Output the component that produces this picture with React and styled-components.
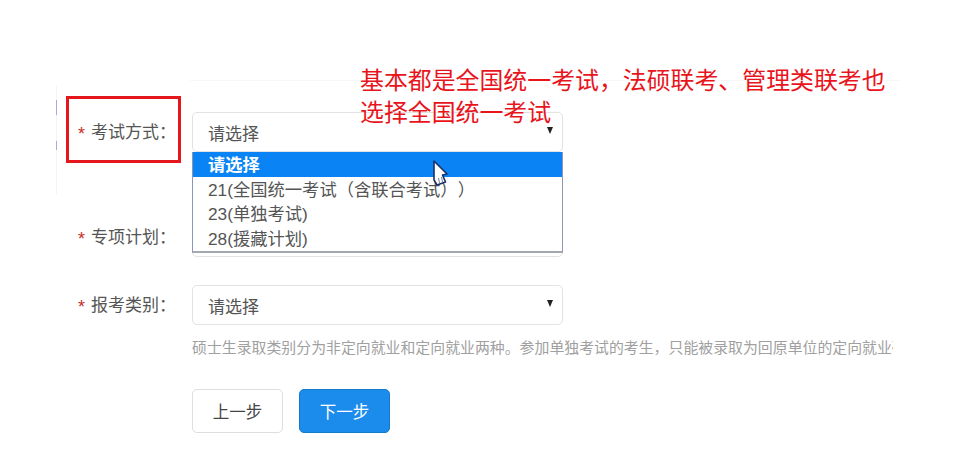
import React from "react";
import styled, { createGlobalStyle } from "styled-components";

const Global = createGlobalStyle`
  html, body { margin: 0; padding: 0; background: #fff; }
  #root { width: 954px; height: 467px; overflow: hidden; }
`;
const FONT = `"Liberation Sans", "Noto Sans CJK SC", sans-serif`;

const Page = styled.div`
  position: relative;
  width: 954px;
  height: 467px;
  padding: 80px 0 0 78px;
  box-sizing: border-box;
  font-family: ${FONT};
  text-spacing-trim: space-all;
  color: #555;
  background: #fff;
`;
const Divider = styled.div`
  width: 710px;
  height: 1px;
  margin: 0 0 31px 112px;
  background: #f7f7f7;
`;
const Row = styled.div`
  display: flex;
  align-items: center;
  margin-bottom: ${(p) => p.$after}px;
`;
const Label = styled.div`
  width: 114px;
  flex: none;
  padding-top: 2px;
  font-size: 17px;
  line-height: 24px;
  color: #555;
  white-space: nowrap;
`;
const Star = styled.span`
  display: inline-block;
  width: 13px;
  color: #c9301f;
  font-size: 18px;
  line-height: 16px;
  vertical-align: -2px;
`;
const SelectWrap = styled.div`
  position: relative;
  width: 371px;
  height: 40px;
`;
const Control = styled.div`
  display: flex;
  align-items: center;
  justify-content: space-between;
  height: 100%;
  box-sizing: border-box;
  padding: 0 9px 0 15px;
  background: #fff;
  border: 1px solid #e2e2e2;
  border-radius: 5px;
  font-size: 17px;
  color: #555;
`;
const Caret = styled.i`
  width: 0;
  height: 0;
  margin-top: -3px;
  border-left: 3.5px solid transparent;
  border-right: 3.5px solid transparent;
  border-top: 7px solid #222;
`;
const Dropdown = styled.ul`
  position: absolute;
  left: 0;
  top: 40px;
  width: 100%;
  box-sizing: border-box;
  margin: 0;
  padding: 0 0 1px;
  list-style: none;
  background: #fff;
  border: 1px solid #8e96b8;
  border-top: none;
  border-bottom-color: #a3a9ae;
  border-bottom-width: 2px;
  z-index: 2;
`;
const Option = styled.li`
  height: 24.6px;
  line-height: 26.6px;
  padding-left: 15px;
  font-size: 17.3px;
  white-space: nowrap;
  color: ${(p) => (p.$active ? "#fff" : "#555")};
  font-weight: ${(p) => (p.$active ? 700 : 400)};
  background: ${(p) => (p.$active ? "#0a84f5" : "#fff")};
`;
const Hint = styled.div`
  width: 701px;
  margin: 13px 0 0 114px;
  overflow: hidden;
  white-space: nowrap;
  font-size: 14.9px;
  line-height: 20px;
  color: #a0a0a0;
`;
const Actions = styled.div`
  display: flex;
  gap: 16px;
  margin: 31px 0 0 114px;
`;
const Button = styled.button`
  width: 91px;
  height: 44px;
  padding: 0;
  font-family: ${FONT};
  font-size: 16.5px;
  border-radius: 5px;
  border: 1px solid ${(p) => (p.$primary ? "#1379c9" : "#dedede")};
  background: ${(p) => (p.$primary ? "#1b8ceb" : "#fff")};
  color: ${(p) => (p.$primary ? "#fff" : "#444")};
`;
const Note = styled.div`
  position: absolute;
  left: 360px;
  top: 63px;
  width: 540px;
  font-family: "Noto Sans CJK SC", sans-serif;
  font-size: 23.9px;
  line-height: 32px;
  color: #e8141c;
  z-index: 3;
`;
const Highlight = styled.div`
  position: absolute;
  left: 66px;
  top: 96px;
  width: 115px;
  height: 67px;
  box-sizing: border-box;
  border: 3px solid #e5161c;
`;
const Smear = styled.div`
  position: absolute;
  left: 56px;
  top: ${(p) => p.$top}px;
  width: 1px;
  height: ${(p) => p.$h}px;
  background: ${(p) => p.$c};
`;
const Pointer = styled.svg`
  position: absolute;
  left: 432px;
  top: 160px;
  z-index: 4;
`;

const Select = ({ children }) => (
  <SelectWrap>
    <Control>
      请选择
      <Caret />
    </Control>
    {children}
  </SelectWrap>
);

export default function App() {
  return (
    <Page>
      <Global />
      <Divider />
      <Row $after={65}>
        <Label><Star>*</Star>考试方式：</Label>
        <Select>
          <Dropdown>
            <Option $active>请选择</Option>
            <Option>21(全国统一考试（含联合考试））</Option>
            <Option>23(单独考试)</Option>
            <Option>28(援藏计划)</Option>
          </Dropdown>
        </Select>
      </Row>
      <Row $after={28}>
        <Label><Star>*</Star>专项计划：</Label>
        <Select />
      </Row>
      <Row $after={0}>
        <Label><Star>*</Star>报考类别：</Label>
        <Select />
      </Row>
      <Hint>硕士生录取类别分为非定向就业和定向就业两种。参加单独考试的考生，只能被录取为回原单位的定向就业硕士生。</Hint>
      <Actions>
        <Button>上一步</Button>
        <Button $primary>下一步</Button>
      </Actions>
      <Note>基本都是全国统一考试，法硕联考、管理类联考也选择全国统一考试</Note>
      <Highlight />
      <Smear $top={85} $h={110} $c="#f6f4f2" />
      <Smear $top={100} $h={15} $c="#b9a3de" />
      <Smear $top={141} $h={9} $c="#b9a3de" />
      <Pointer width="18" height="28" viewBox="0 0 18 28">
        <path d="M2 1 L15 14 L10.5 15 L13.5 22 L5 25 L2 20 Z" fill="#fff" stroke="#1c2f66" strokeWidth="1.6" strokeLinejoin="round" />
        <path d="M6.5 18 L7.5 23 M9.5 17 L10.5 22" stroke="#76809a" strokeWidth="1" />
      </Pointer>
    </Page>
  );
}
